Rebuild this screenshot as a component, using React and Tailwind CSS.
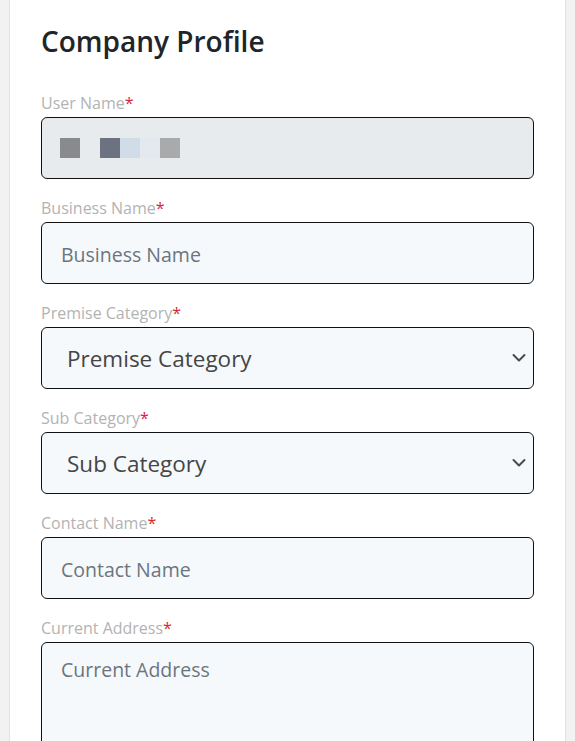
import React from 'react';

const font = { fontFamily: '"Open Sans", "Noto Sans", Arial, sans-serif' };

function Label({ children }) {
  return (
    <label className="block text-[16px] leading-[24px] text-[#b3b3b3] mb-[2px]">
      {children}
      <span className="text-[#d9262f]">*</span>
    </label>
  );
}

function Chevron() {
  return (
    <svg
      className="pointer-events-none absolute right-[8px] top-1/2 -translate-y-1/2"
      width="14"
      height="9"
      viewBox="0 0 14 9"
      fill="none"
    >
      <path d="M1.5 1.5 L7 7 L12.5 1.5" stroke="#4a4a4a" strokeWidth="2" strokeLinecap="round" strokeLinejoin="round" />
    </svg>
  );
}

function TextField({ label, placeholder }) {
  return (
    <div className="mt-[17px]">
      <Label>{label}</Label>
      <input
        type="text"
        placeholder={placeholder}
        className="block w-full h-[62px] rounded-[6px] border border-[#111] bg-[#f5f9fc] pl-[19px] pt-[3px] text-[19.5px] text-[#333] placeholder:text-[#6c757d] outline-none"
      />
    </div>
  );
}

function SelectField({ label, placeholder }) {
  return (
    <div className="mt-[17px]">
      <Label>{label}</Label>
      <div className="relative">
        <select
          defaultValue=""
          className="block w-full h-[62px] appearance-none rounded-[6px] border border-[#111] bg-[#f5f9fc] pl-[25px] pt-[2px] text-[22.5px] text-[#454545] outline-none"
        >
          <option value="" disabled>
            {placeholder}
          </option>
        </select>
        <Chevron />
      </div>
    </div>
  );
}

export default function App() {
  return (
    <div className="min-h-screen bg-[#f2f2f2] px-[9px]" style={font}>
      <div className="min-h-[741px] bg-white border-x border-[#e2e2e2] px-[31px] pt-[23px] pb-[40px]">
        <h1 className="text-[28px] leading-[36px] font-semibold text-[#212529]">Company Profile</h1>

        {/* read-only user name, value masked */}
        <div className="mt-[32px]">
          <Label>User Name</Label>
          <div className="flex h-[62px] items-center rounded-[6px] border border-[#111] bg-[#e8ebee] pl-[18px]">
            <div className="flex">
              <span className="h-[20px] w-[20px] bg-[#898a8e]" />
              <span className="h-[20px] w-[20px]" />
              <span className="h-[20px] w-[20px] bg-[#6c7280]" />
              <span className="h-[20px] w-[20px] bg-[#d0dde8]" />
              <span className="h-[20px] w-[20px] bg-[#e3e9ee]" />
              <span className="h-[20px] w-[20px] bg-[#a9aaab]" />
            </div>
          </div>
        </div>

        <TextField label="Business Name" placeholder="Business Name" />
        <SelectField label="Premise Category" placeholder="Premise Category" />
        <SelectField label="Sub Category" placeholder="Sub Category" />
        <TextField label="Contact Name" placeholder="Contact Name" />

        <div className="mt-[17px]">
          <Label>Current Address</Label>
          <textarea
            placeholder="Current Address"
            className="block w-full h-[140px] resize-none rounded-[6px] border border-[#111] bg-[#f5f9fc] px-[19px] pt-[12px] text-[19.5px] leading-[30px] text-[#333] placeholder:text-[#6c757d] outline-none"
          />
        </div>
      </div>
    </div>
  );
}
